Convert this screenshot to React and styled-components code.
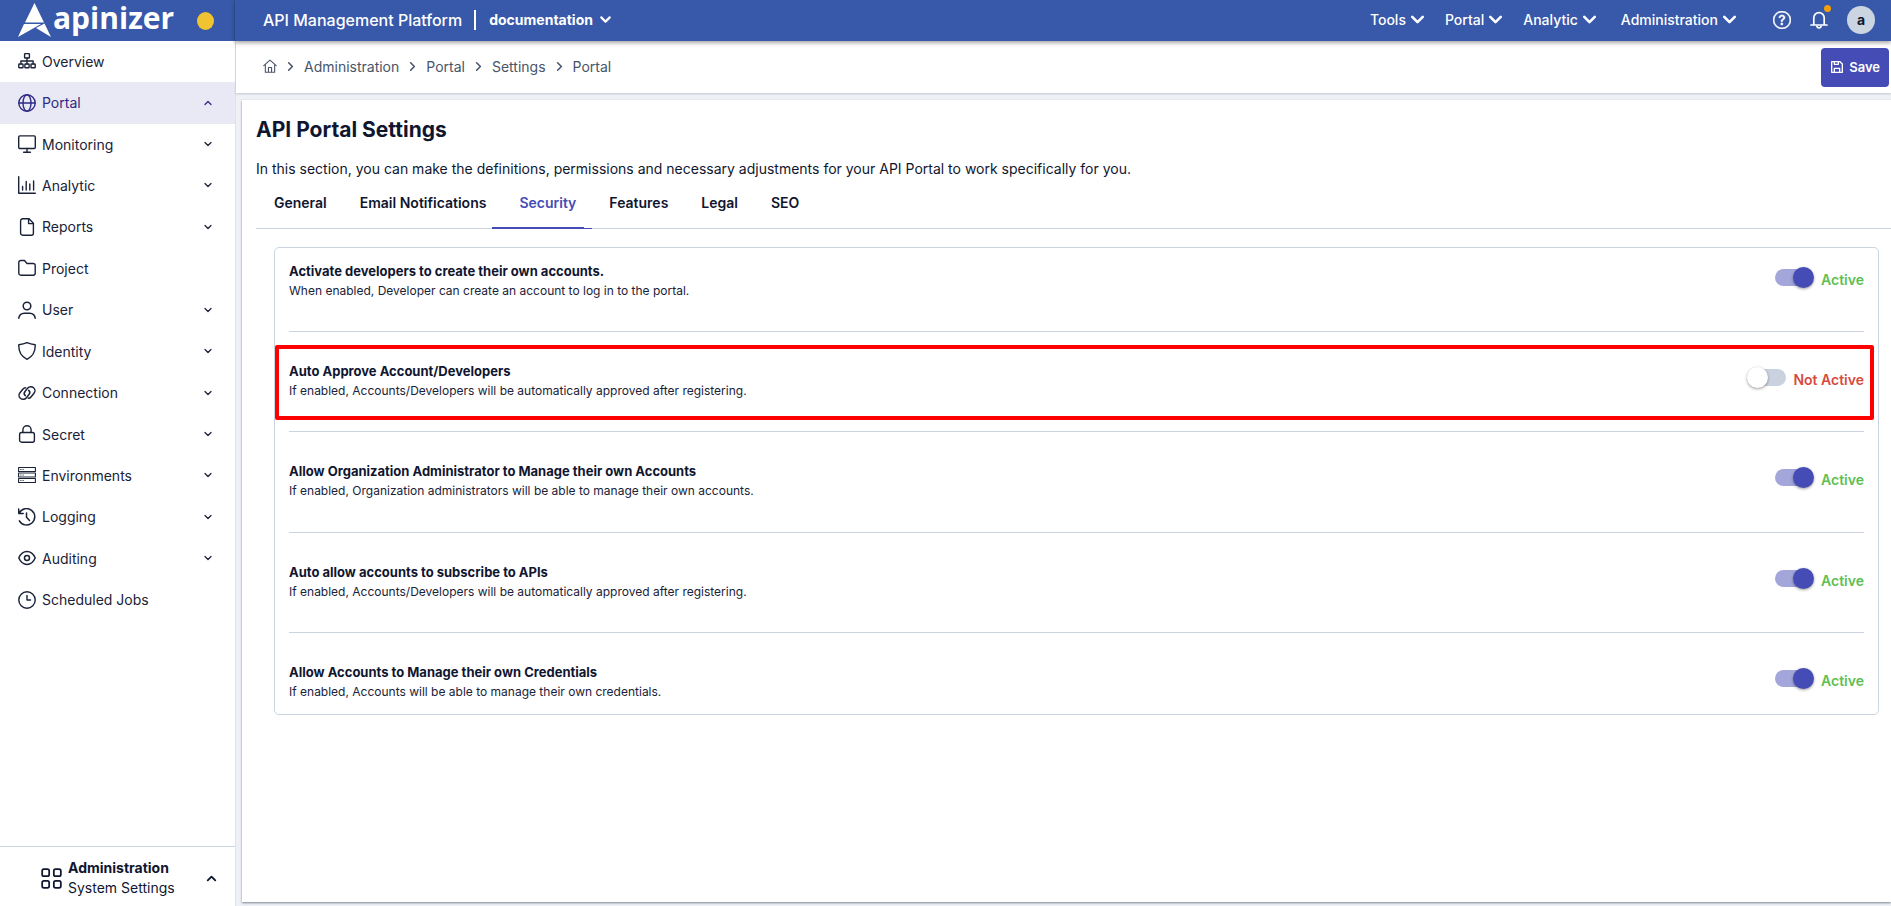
import React from "react"
import styled, { createGlobalStyle, css } from "styled-components"
import { ChevronDown, ChevronUp, ChevronRight } from "lucide-react"
import { BsQuestionCircle } from "react-icons/bs"

const GlobalStyle = createGlobalStyle`
  * {
    box-sizing: border-box;
  }

  body {
    margin: 0;
    font-family: Inter, "Liberation Sans", sans-serif;
    font-size: 14px;
    color: #10162f;
    background-color: #eef2f7;
  }

  button {
    font: inherit;
    color: inherit;
    border: 0;
    background: none;
    padding: 0;
    cursor: pointer;
  }

  a {
    color: inherit;
    text-decoration: none;
  }
`

const Page = styled.div`
  display: flex;
  flex-direction: column;
  min-height: 100vh;
`

const Header = styled.header`
  position: relative;
  z-index: 1;
  display: flex;
  align-items: center;
  height: 41px;
  color: #ffffff;
  background-color: #3858a9;
`

const Brand = styled.div`
  display: flex;
  align-items: center;
  flex-shrink: 0;
  width: 235px;
  height: 41px;
  padding: 0 20px 0 17px;
  border-right: 1px solid #3453a0;
`

const BrandLink = styled.a`
  display: flex;
  align-items: center;
  gap: 1px;
  height: 41px;
`

const BrandName = styled.span`
  padding-bottom: 6px;
  font-family: "Open Sans", "Noto Sans", sans-serif;
  font-size: 30px;
  font-weight: 700;
  line-height: 36px;
`

const StatusDot = styled.span`
  width: 17px;
  height: 18px;
  margin-left: auto;
  border-radius: 50%;
  background-color: #f0c330;
`

const TopBar = styled.div`
  display: flex;
  flex: 1;
  align-items: center;
  height: 41px;
  padding: 0 16px 2px 28px;
  box-shadow: 0 2px 4px rgba(0, 0, 0, 0.35);
`

const PlatformName = styled.span`
  padding-right: 12px;
  border-right: 2px solid #ffffff;
  font-size: 16px;
  font-weight: 500;
  line-height: 20px;
`

const ProjectButton = styled.button`
  display: flex;
  align-items: center;
  gap: 4px;
  margin-left: 13px;
  font-weight: 700;
`

const TopNav = styled.nav`
  display: flex;
  align-items: center;
  gap: 17px;
  margin-left: auto;
`

const TopNavButton = styled.button`
  display: flex;
  align-items: center;
  gap: 1px;
  font-weight: 500;

  &:last-child {
    margin-left: 4px;
  }
`

const TopActions = styled.div`
  display: flex;
  align-items: center;
  gap: 19px;
  margin-left: 33px;
`

const IconButton = styled.button`
  position: relative;
  display: flex;
`

const BellDot = styled.span`
  position: absolute;
  top: -6px;
  right: -3px;
  width: 7px;
  height: 7px;
  border-radius: 50%;
  background-color: #f59e0b;
`

const Avatar = styled.button`
  width: 28px;
  height: 28px;
  border-radius: 50%;
  color: #10162f;
  background-color: #cbd5e1;
  font-weight: 700;
`

const Body = styled.div`
  display: flex;
  flex: 1;
`

const Sidebar = styled.aside`
  display: flex;
  flex-direction: column;
  flex-shrink: 0;
  width: 236px;
  border-right: 1px solid #dde3eb;
  background-color: #ffffff;
`

const Menu = styled.nav`
  display: grid;
  grid-auto-rows: 1fr;
  min-height: 580px;
`

const MenuItem = styled.a`
  display: flex;
  align-items: center;
  gap: 6px;
  padding: 0 21px 1px 18px;
  color: #1a2238;

  ${(props) =>
    props.$active &&
    css`
      color: #2e2a86;
      background-color: #e9e8f5;
    `}
`

const MenuLabel = styled.span`
  flex: 1;
`

const SidebarFooter = styled.button`
  display: flex;
  align-items: center;
  gap: 6px;
  height: 60px;
  margin-top: auto;
  padding: 3px 16px 0 41px;
  border-top: 1px solid #cbd5e1;
  line-height: 20px;
  text-align: left;
`

const FooterText = styled.span`
  display: flex;
  flex: 1;
  flex-direction: column;
`

const Main = styled.main`
  display: flex;
  flex: 1;
  flex-direction: column;
  min-width: 0;
`

const CrumbBar = styled.div`
  display: flex;
  align-items: center;
  justify-content: space-between;
  height: 52px;
  padding: 0 2px 0 27px;
  background-color: #ffffff;
  box-shadow: 0 1px 2px rgba(15, 23, 42, 0.2);
`

const Crumbs = styled.nav`
  display: flex;
  align-items: center;
  gap: 6px;
  padding-bottom: 2px;
  color: #475569;
`

const SaveButton = styled.button`
  display: flex;
  align-items: center;
  gap: 6px;
  height: 39px;
  padding: 0 9px 0 10px;
  border-radius: 4px;
  color: #ffffff;
  background-color: #464cb5;
  font-size: 13px;
  font-weight: 600;
`

const Panel = styled.section`
  flex: 1;
  margin: 7px 0 4px 6px;
  padding: 16px 0 0 14px;
  background-color: #ffffff;
  box-shadow: 0 1px 2px rgba(15, 23, 42, 0.5);
`

const Title = styled.h1`
  margin: 0;
  font-size: 21px;
  font-weight: 700;
  line-height: 28px;
`

const Intro = styled.p`
  margin: 15px 0 0;
  line-height: 20px;
`

const Tabs = styled.div`
  display: flex;
  height: 50px;
  padding-left: 1px;
  border-bottom: 1px solid #cbd5e1;
`

const Tab = styled.button`
  position: relative;
  height: 50px;
  padding: 0 16px 2px 17px;
  border-bottom: 1px solid transparent;
  font-weight: 600;

  ${(props) =>
    props.$active &&
    css`
      margin-left: -10px;
      padding-left: 27px;
      color: #464cb5;
      border-bottom-color: #464cb5;

      &::after {
        content: "";
        position: absolute;
        left: 0;
        right: 8px;
        bottom: -1px;
        height: 2px;
        background-color: #464cb5;
      }
    `}
`

const SettingsCard = styled.div`
  display: grid;
  grid-template-rows: 84px repeat(3, 1fr) 81px;
  min-height: 468px;
  margin: 18px 12px 0 18px;
  padding: 0 14px;
  border: 1px solid #cbd5e1;
  border-radius: 5px;
`

const Setting = styled.div`
  position: relative;
  display: flex;
  align-items: flex-start;
  justify-content: space-between;
  padding-top: 29px;
  border-bottom: 1px solid #cbd5e1;

  &:first-child {
    padding-top: 13px;
  }

  &:last-child {
    border-bottom: 0;
  }
`

const SettingText = styled.label`
  display: flex;
  flex-direction: column;
`

const SettingName = styled.span`
  font-size: 13px;
  font-weight: 700;
  line-height: 20px;
`

const SettingHint = styled.span`
  font-size: 12px;
  line-height: 20px;
  color: #1a2238;
`

const SwitchGroup = styled.div`
  display: flex;
  align-items: flex-start;
  gap: 7px;
  padding-top: 6px;
`

const Switch = styled.input`
  position: relative;
  width: 39px;
  height: 21px;
  margin: 0;
  appearance: none;
  cursor: pointer;

  &::before {
    content: "";
    position: absolute;
    top: 2px;
    left: 3px;
    width: 36px;
    height: 17px;
    border-radius: 9px;
    background-color: #cbd2df;
  }

  &::after {
    content: "";
    position: absolute;
    top: 0;
    left: 0;
    width: 21px;
    height: 21px;
    border-radius: 50%;
    background-color: #ffffff;
    box-shadow: 0 1px 3px rgba(0, 0, 0, 0.4);
  }

  &:checked::before {
    left: 0;
    background-color: #a3a6da;
  }

  &:checked::after {
    left: 18px;
    background-color: #464cb5;
  }
`

const SwitchState = styled.span`
  margin-top: 3px;
  font-weight: 600;
  line-height: 20px;
  color: ${(props) => (props.$on ? "#5ebf52" : "#d84a3f")};
`

const Highlight = styled.div`
  position: absolute;
  top: 13px;
  left: -14px;
  right: -10px;
  height: 75px;
  border: 4px solid #fe0000;
  border-radius: 2px;
  pointer-events: none;
`

function LineIcon({ size = 18, width = 1.4, children }) {
  return (
    <svg
      width={size}
      height={size}
      viewBox="0 0 18 18"
      fill="none"
      stroke="currentColor"
      strokeWidth={width}
      strokeLinecap="round"
      strokeLinejoin="round"
    >
      {children}
    </svg>
  )
}

const icons = {
  overview: (
    <LineIcon>
      <rect x="6.6" y="1.6" width="4.8" height="4.4" rx="0.6" />
      <path d="M9 6v6M2.9 12V9h12.2v3" />
      <rect x="0.8" y="12" width="4.2" height="3.8" rx="0.6" />
      <rect x="6.9" y="12" width="4.2" height="3.8" rx="0.6" />
      <rect x="13" y="12" width="4.2" height="3.8" rx="0.6" />
    </LineIcon>
  ),
  portal: (
    <LineIcon>
      <circle cx="9" cy="9" r="8.2" />
      <ellipse cx="9" cy="9" rx="4" ry="8.2" />
      <path d="M0.8 9h16.4" />
    </LineIcon>
  ),
  monitoring: (
    <LineIcon>
      <rect x="0.7" y="0.9" width="16.6" height="12.6" rx="1.2" />
      <path d="M9 13.5v3.6M5.6 17.2h6.8" />
    </LineIcon>
  ),
  analytic: (
    <LineIcon>
      <path d="M0.7 0.7v16.6h16.6M4.6 10.5V14M8.2 5.5V14M11.8 8V14M15.6 5V14" />
    </LineIcon>
  ),
  reports: (
    <LineIcon>
      <path d="M11 0.8H4.6a2 2 0 0 0-2 2v12.4a2 2 0 0 0 2 2h8.800a2 2 0 0 0 2-2V5.200z" />
      <path d="M10.600 0.800v4.800h4.800" />
    </LineIcon>
  ),
  project: (
    <LineIcon>
      <path d="M0.800 3.500a2 2 0 0 1 2-2h3.700l2.500 3h6.200a2 2 0 0 1 2 2v7.700a2 2 0 0 1-2 2H2.800a2 2 0 0 1-2-2z" />
    </LineIcon>
  ),
  user: (
    <LineIcon width={1.5}>
      <circle cx="9" cy="5" r="3.8" />
      <path d="M0.8 17.2c0-3 2.6-5 5.4-5h5.6c2.8 0 5.4 2 5.4 5" />
    </LineIcon>
  ),
  identity: (
    <LineIcon>
      <path d="M9 0.7C6.5 1.9 3.5 2.5 0.8 2.7 0.5 9 3 14.5 9 17.3 15 14.500 17.500 9 17.200 2.700 14.500 2.500 11.500 1.900 9 0.700z" />
    </LineIcon>
  ),
  connection: (
    <LineIcon width={1.5}>
      <path d="M7.3 11.6a3 3 0 0 1-.3-4.2l2.8-3.3a4 4 0 0 1 5.8-.4 4 4 0 0 1 .4 5.6l-3 3.6a4 4 0 0 1-2.6 1.4" />
      <path d="M10.7 6.4a3 3 0 0 1 .3 4.2l-2.8 3.3a4 4 0 0 1-5.8.4 4 4 0 0 1-.4-5.600l3-3.600a4 4 0 0 1 2.600-1.400" />
    </LineIcon>
  ),
  secret: (
    <LineIcon>
      <rect x="1.600" y="7.500" width="14.800" height="9.700" rx="2" />
      <path d="M4.900 7.500V4.900a4.100 4.100 0 0 1 8.200 0v2.600" />
    </LineIcon>
  ),
  environments: (
    <LineIcon width={1.1}>
      <path d="M0.6 1.5h16.8v4H0.6zM0.6 7h16.8v4H0.6zM0.6 12.5h16.8v4H0.6z" />
      <path d="M2.800 3.500h.2M5 3.500h.2M2.800 9h.2M5 9h.2M2.800 14.500h.2M5 14.500h.2" />
    </LineIcon>
  ),
  logging: (
    <LineIcon width={1.5}>
      <path d="M0.7 0.9v4.5h4.5M1.200 5.200a8.200 8.200 0 1 1 .2 7.600" />
      <path d="M8.500 5v4.300l3 3.200" />
    </LineIcon>
  ),
  auditing: (
    <LineIcon width={1.500}>
      <path d="M0.800 9C2.600 5 5.600 2.600 9 2.600S15.400 5 17.200 9c-1.800 4-4.800 6.400-8.200 6.400S2.600 13 0.800 9z" />
      <circle cx="9" cy="9" r="2.500" />
    </LineIcon>
  ),
  jobs: (
    <LineIcon>
      <circle cx="9" cy="9" r="8.2" />
      <path d="M9 4.500V9h3.500" />
    </LineIcon>
  ),
}

const menu = [
  { label: "Overview", icon: icons.overview },
  { label: "Portal", icon: icons.portal, active: true },
  { label: "Monitoring", icon: icons.monitoring, open: true },
  { label: "Analytic", icon: icons.analytic, open: true },
  { label: "Reports", icon: icons.reports, open: true },
  { label: "Project", icon: icons.project },
  { label: "User", icon: icons.user, open: true },
  { label: "Identity", icon: icons.identity, open: true },
  { label: "Connection", icon: icons.connection, open: true },
  { label: "Secret", icon: icons.secret, open: true },
  { label: "Environments", icon: icons.environments, open: true },
  { label: "Logging", icon: icons.logging, open: true },
  { label: "Auditing", icon: icons.auditing, open: true },
  { label: "Scheduled Jobs", icon: icons.jobs },
]

const tabs = ["General", "Email Notifications", "Security", "Features", "Legal", "SEO"]

const settings = [
  {
    name: "Activate developers to create their own accounts.",
    hint: "When enabled, Developer can create an account to log in to the portal.",
    on: true,
  },
  {
    name: "Auto Approve Account/Developers",
    hint: "If enabled, Accounts/Developers will be automatically approved after registering.",
    on: false,
    marked: true,
  },
  {
    name: "Allow Organization Administrator to Manage their own Accounts",
    hint: "If enabled, Organization administrators will be able to manage their own accounts.",
    on: true,
  },
  {
    name: "Auto allow accounts to subscribe to APIs",
    hint: "If enabled, Accounts/Developers will be automatically approved after registering.",
    on: true,
  },
  {
    name: "Allow Accounts to Manage their own Credentials",
    hint: "If enabled, Accounts will be able to manage their own credentials.",
    on: true,
  },
]

function Logo() {
  return (
    <svg width="35" height="35" viewBox="0 0 35 35" fill="#ffffff">
      <path d="M17.5 0L27 19.5H8z" />
      <path d="M7 21h17L1 34z" />
      <path d="M27.500 20.500L34 34 19 25z" />
    </svg>
  )
}

function App() {
  return (
    <Page>
      <GlobalStyle />
      <Header>
        <Brand>
          <BrandLink href="#">
            <Logo />
            <BrandName>apinizer</BrandName>
          </BrandLink>
          <StatusDot />
        </Brand>
        <TopBar>
          <PlatformName>API Management Platform</PlatformName>
          <ProjectButton>
            documentation
            <ChevronDown size={17} strokeWidth={3} />
          </ProjectButton>
          <TopNav>
            {["Tools", "Portal", "Analytic", "Administration"].map((name) => (
              <TopNavButton key={name}>
                {name}
                <ChevronDown size={21} strokeWidth={3} />
              </TopNavButton>
            ))}
          </TopNav>
          <TopActions>
            <IconButton aria-label="Help">
              <BsQuestionCircle size={18} strokeWidth={0.5} />
            </IconButton>
            <IconButton aria-label="Notifications">
              <LineIcon width={1.7}>
                <path d="M3.800 13.800V6.800a5.200 5.200 0 0 1 10.400 0v7M1 14h16" />
                <path d="M6.800 15.200a2.300 2.300 0 0 0 4.400 0" />
              </LineIcon>
              <BellDot />
            </IconButton>
            <Avatar>a</Avatar>
          </TopActions>
        </TopBar>
      </Header>
      <Body>
        <Sidebar>
          <Menu>
            {menu.map((item) => (
              <MenuItem key={item.label} href="#" $active={item.active}>
                {item.icon}
                <MenuLabel>{item.label}</MenuLabel>
                {item.active && <ChevronUp size={12} strokeWidth={2.5} />}
                {item.open && <ChevronDown size={12} strokeWidth={2.5} />}
              </MenuItem>
            ))}
          </Menu>
          <SidebarFooter>
            <LineIcon size={21} width={1.5}>
              <rect x="1" y="1" width="6" height="6" rx="1.5" />
              <rect x="11" y="1" width="6" height="6" rx="1.5" />
              <rect x="1" y="11" width="6" height="6" rx="1.5" />
              <rect x="11" y="11" width="6" height="6" rx="1.5" />
            </LineIcon>
            <FooterText>
              <strong>Administration</strong>
              <span>System Settings</span>
            </FooterText>
            <ChevronUp size={15} strokeWidth={3} />
          </SidebarFooter>
        </Sidebar>
        <Main>
          <CrumbBar>
            <Crumbs>
              <LineIcon size={14}>
                <path d="M1 8.500L9 1.500l8 7M3 7v10h12V7M7 17v-6h4v6" />
              </LineIcon>
              {["Administration", "Portal", "Settings", "Portal"].map((name, i) => (
                <React.Fragment key={i}>
                  <ChevronRight size={15} strokeWidth={2.5} />
                  <a href="#">{name}</a>
                </React.Fragment>
              ))}
            </Crumbs>
            <SaveButton>
              <LineIcon size={12} width={2}>
                <path d="M1 1h12.500l3.500 3.500V17H1zM5 1v4h6V1M5 17v-6h8v6" />
              </LineIcon>
              Save
            </SaveButton>
          </CrumbBar>
          <Panel>
            <Title>API Portal Settings</Title>
            <Intro>
              In this section, you can make the definitions, permissions and necessary
              adjustments for your API Portal to work specifically for you.
            </Intro>
            <Tabs role="tablist">
              {tabs.map((name) => (
                <Tab key={name} role="tab" $active={name === "Security"}>
                  {name}
                </Tab>
              ))}
            </Tabs>
            <SettingsCard>
              {settings.map((item, i) => (
                <Setting key={item.name}>
                  <SettingText htmlFor={`setting-${i}`}>
                    <SettingName>{item.name}</SettingName>
                    <SettingHint>{item.hint}</SettingHint>
                  </SettingText>
                  <SwitchGroup>
                    <Switch id={`setting-${i}`} type="checkbox" defaultChecked={item.on} />
                    <SwitchState $on={item.on}>{item.on ? "Active" : "Not Active"}</SwitchState>
                  </SwitchGroup>
                  {item.marked && <Highlight />}
                </Setting>
              ))}
            </SettingsCard>
          </Panel>
        </Main>
      </Body>
    </Page>
  )
}

export default App
